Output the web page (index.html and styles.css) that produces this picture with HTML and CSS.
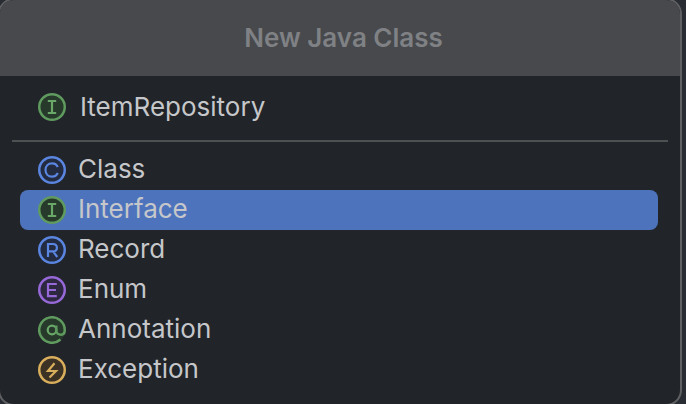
FILE: index.html
```html
<!DOCTYPE html>
<html lang="en">
<head>
<meta charset="utf-8">
<title>New Java Class</title>
<link rel="stylesheet" href="styles.css">
</head>
<body>
<div class="dialog">
  <header class="header">New Java Class</header>
  <div class="field">
    <svg class="icon" viewBox="0 0 28 28"><circle class="green" cx="14" cy="14" r="12.75"/><path class="glyph-green" d="M9.800 8h8.400M14 8v12M9.800 20h8.400"/></svg>
    <span class="name">ItemRepository</span>
  </div>
  <div class="separator"></div>
  <ul class="list">
    <li class="row">
      <svg class="icon" viewBox="0 0 28 28"><circle class="blue" cx="14" cy="14" r="12.75"/><path class="glyph-blue" d="M19.800 11A6.200 6.200 0 0 0 14 7.400c-3.800 0-6.500 2.800-6.500 6.600s2.700 6.600 6.500 6.600a6.200 6.200 0 0 0 5.800-3.600"/></svg>
      <span class="label">Class</span>
    </li>
    <li class="row selected">
      <svg class="icon" viewBox="0 0 28 28"><circle class="green" cx="14" cy="14" r="12.75"/><path class="glyph-green" d="M9.800 8h8.400M14 8v12M9.800 20h8.400"/></svg>
      <span class="label">Interface</span>
    </li>
    <li class="row">
      <svg class="icon" viewBox="0 0 28 28"><circle class="blue" cx="14" cy="14" r="12.75"/><path class="glyph-blue" d="M10 21V8h4.800c2.600 0 4.100 1.400 4.100 3.700s-1.500 3.700-4.100 3.700H10M15 15.400l4.300 5.600"/></svg>
      <span class="label">Record</span>
    </li>
    <li class="row">
      <svg class="icon" viewBox="0 0 28 28"><circle class="purple" cx="14" cy="14" r="12.75"/><path class="glyph-purple" d="M18.800 8H10v12.200h8.800M10 14h8"/></svg>
      <span class="label">Enum</span>
    </li>
    <li class="row">
      <svg class="icon" viewBox="0 0 28 28"><circle class="green-fill" cx="14" cy="14" r="13.500"/><circle class="glyph-green" cx="14" cy="14" r="4.300"/><path class="glyph-ring" d="M22.500 23.500A12.750 12.750 0 1 1 26.750 14c0 3-1.500 4.700-3.700 4.700s-4.750-1.200-4.750-3.700V9.500"/></svg>
      <span class="label">Annotation</span>
    </li>
    <li class="row">
      <svg class="icon" viewBox="0 0 28 28"><circle class="amber" cx="14" cy="14" r="12.75"/><path class="glyph-amber" d="M16.500 7.300 10 15h8l-6.500 6.500"/></svg>
      <span class="label">Exception</span>
    </li>
  </ul>
</div>
</body>
</html>
```
FILE: styles.css
```css
* { box-sizing: border-box; }
html, body { height: 100%; }
body {
  margin: 0;
  overflow: hidden;
  background: #2a2c34;
  font-family: Inter, "Liberation Sans", sans-serif;
}
.dialog {
  width: 684px;
  height: 408px;
  margin: -2px 0 0 -2px;
  border: 2px solid #5e6062;
  border-radius: 16px;
  background: #212428;
  overflow: hidden;
}
.header {
  height: 76px;
  padding-left: 7px;
  background: #47494d;
  color: #7f8184;
  font-size: 26px;
  font-weight: 600;
  line-height: 76px;
  text-align: center;
}
.field {
  display: flex;
  align-items: center;
  height: 40px;
  margin-top: 11px;
  padding-left: 38px;
  gap: 14px;
  color: #c5c7ca;
  font-size: 26px;
}
.name { margin-bottom: 2px; }
.separator {
  height: 2px;
  margin: 13px 12px 8px;
  background: #4e5052;
}
.list {
  list-style: none;
  margin: 0;
  padding: 0 22px 0 20px;
}
.row {
  display: flex;
  align-items: center;
  height: 40px;
  padding-left: 18px;
  gap: 12px;
  border-radius: 8px;
  color: #c5c7ca;
  font-size: 26px;
}
.label { margin-bottom: 3px; }
.selected { background: #4e73bd; }
.icon { width: 28px; height: 28px; flex: none; }
.icon circle { stroke-width: 2.500; }
.green { fill: #27392a; stroke: #5f9a5f; }
.green-fill { fill: #27392a; }
.blue { fill: #232b40; stroke: #5a85e0; }
.purple { fill: #2d2740; stroke: #9668d8; }
.amber { fill: #3b3125; stroke: #d9ae5c; }
.icon .glyph-green, .icon .glyph-blue, .icon .glyph-purple, .icon .glyph-amber, .icon .glyph-ring {
  fill: none;
  stroke-width: 2.200;
}
.icon .glyph-ring { stroke: #5f9a5f; stroke-width: 2.500; }
.glyph-green { stroke: #6aa86a; }
.glyph-blue { stroke: #5a85e0; }
.glyph-purple { stroke: #9668d8; }
.glyph-amber { stroke: #d9ae5c; }
```
